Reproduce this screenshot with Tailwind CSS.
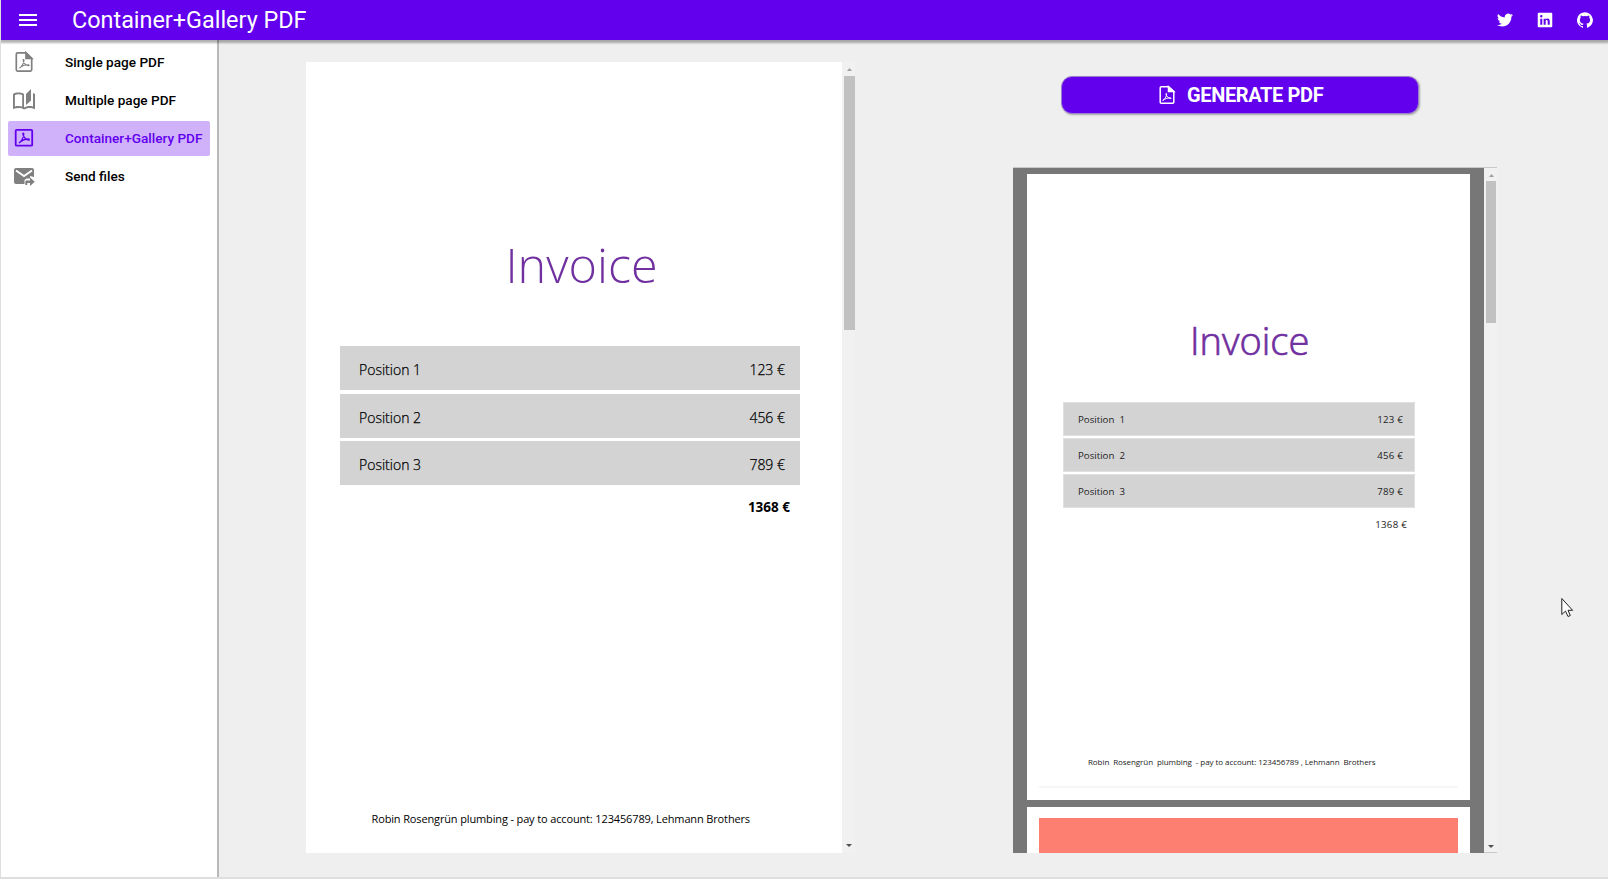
<!DOCTYPE html>
<html lang="en">
<head>
<meta charset="utf-8">
<title>Container+Gallery PDF</title>
<script src="https://cdn.jsdelivr.net/npm/@tailwindcss/browser@4"></script>
</head>
<body class="w-[1608px] h-[879px] overflow-hidden bg-[#efefef] border-l border-[#dedede] font-['Roboto',sans-serif] flex flex-col">
<header class="h-10 shrink-0 bg-[#6200ee] text-white flex items-center pl-[14px] pr-[15px] relative z-10 shadow-[0_2px_2px_1px_rgba(0,0,0,0.3)]">
  <svg class="size-6 ml-px" viewBox="0 0 24 24" fill="currentColor"><path d="M3 18h18v-2H3v2zm0-5h18v-2H3v2zm0-7v2h18V6H3z"/></svg>
  <h1 class="ml-8 text-[23.4px] leading-10 whitespace-nowrap grow">Container+Gallery PDF</h1>
  <div class="flex items-center gap-6">
    <svg class="size-4" viewBox="0 0 24 24" fill="currentColor"><path d="M23.95 4.57a10 10 0 0 1-2.82.78 4.96 4.96 0 0 0 2.16-2.73c-.95.56-2 .96-3.13 1.19a4.92 4.92 0 0 0-8.38 4.48C7.69 8.1 4.07 6.13 1.64 3.16a4.92 4.92 0 0 0 1.52 6.57 4.9 4.9 0 0 1-2.23-.61v.06a4.92 4.92 0 0 0 3.95 4.83 5 5 0 0 1-2.21.08 4.94 4.94 0 0 0 4.6 3.42A9.87 9.87 0 0 1 0 19.54a14 14 0 0 0 7.55 2.21c9.05 0 14-7.5 14-13.98 0-.21 0-.42-.02-.63a9.94 9.94 0 0 0 2.46-2.55z"/></svg>
    <svg class="size-4" viewBox="1 1 22 22" fill="currentColor"><path d="M20.500 2A1.500 1.500 0 0 1 22 3.500v17a1.500 1.500 0 0 1-1.500 1.500h-17A1.500 1.500 0 0 1 2 20.500v-17A1.500 1.500 0 0 1 3.500 2h17m-2 16.500v-5.300a3.260 3.260 0 0 0-3.260-3.260c-.85 0-1.840.52-2.320 1.300v-1.110h-2.790v8.370h2.790v-4.930c0-.77.62-1.400 1.390-1.400a1.400 1.400 0 0 1 1.400 1.400v4.930h2.790M6.880 8.560a1.680 1.680 0 0 0 1.680-1.680c0-.93-.75-1.690-1.680-1.690a1.690 1.690 0 0 0-1.690 1.690c0 .93.76 1.680 1.690 1.680m1.390 9.940v-8.370H5.500v8.370h2.770z"/></svg>
    <svg class="size-4" viewBox="0 0 24 24" fill="currentColor"><path d="M12 .3a12 12 0 0 0-3.800 23.380c.6.12.83-.26.83-.57L9 21.070c-3.340.72-4.040-1.610-4.040-1.610-.55-1.390-1.340-1.760-1.340-1.760-1.080-.74.09-.73.09-.73 1.200.09 1.830 1.240 1.830 1.240 1.080 1.830 2.810 1.300 3.500 1 .1-.78.420-1.310.76-1.610-2.670-.3-5.470-1.330-5.470-5.930 0-1.310.47-2.380 1.240-3.220-.14-.3-.54-1.520.1-3.180 0 0 1-.32 3.300 1.230a11.500 11.500 0 0 1 6 0c2.280-1.550 3.290-1.230 3.290-1.230.64 1.660.24 2.880.12 3.180a4.650 4.650 0 0 1 1.230 3.220c0 4.610-2.800 5.630-5.480 5.920.42.36.81 1.100.81 2.220l-.01 3.290c0 .31.2.69.82.57A12 12 0 0 0 12 .3"/></svg>
  </div>
</header>
<div class="flex grow min-h-0 border-b-2 border-[#dedede]">
  <nav class="w-[218px] shrink-0 bg-white border-r-2 border-[#b8b8b8] pt-[5px] px-[7px] text-[13.600px] font-medium text-black flex flex-col gap-[3px] whitespace-nowrap">
    <a class="h-[35px] flex items-center pl-[4px] gap-[29px] pb-px"><svg class="size-6 text-[#808080] shrink-0" viewBox="0 0 24 24" fill="none" stroke="currentColor" stroke-width="1.700"><path d="M14 2.900H5.600C4.800 2.900 4.300 3.400 4.300 4.200v15.600c0 .8.5 1.300 1.300 1.300h12.800c.8 0 1.300-.5 1.300-1.300V8.500z"/><path d="M14 2.900v5.600h5.700z" fill="currentColor"/><path stroke-width="1.100" d="M7.500 18c2-1 4.500-5 4.500-7.800 0-1-1-1-.9 0 .2 2.500 3 5.500 5.400 5.600 1 0 .8-1-.3-1-2.800 0-6 .8-8.700 3.200z"/></svg>Single page PDF</a>
    <a class="h-[35px] flex items-center pl-[4px] gap-[29px] pb-px"><svg class="size-6 text-[#808080] shrink-0" viewBox="0 0 24 24" fill="currentColor"><path fill-rule="evenodd" d="M1 6v15c2-.7 3.700-1 5.500-1 1.950 0 4.050.4 5.500 1.500 1.350-.85 3.800-1.500 5.500-1.500 1.850 0 3.500.3 5.500 1.200V6c-.6-.45-1.250-.75-2-1v13.500c-1.100-.35-2.300-.5-3.500-.5-1.700 0-4.150.65-5.500 1.500V6c-1.450-1.100-3.550-1.500-5.500-1.500S2.450 4.900 1 6zM2.900 7c1-.5 2.300-.7 3.600-.7s2.600.2 3.700.7v11.600c-1.200-.4-2.500-.6-3.700-.6s-2.500.1-3.600.5z"/><path d="M19 1l-5 5v11l5-4.500z"/></svg>Multiple page PDF</a>
    <a class="h-[35px] w-[202px] rounded-xs flex items-center pl-[4px] gap-[29px] pb-px bg-[#d0b2fb] text-[#6200ee]"><svg class="size-6 shrink-0" viewBox="0 0 24 24" fill="none" stroke="currentColor" stroke-width="1.800"><rect x="3.700" y="3.900" width="16.500" height="15.800" rx="1"/><path stroke-width="1.300" d="M7 17c2-1 5-6 4.800-9.200-.1-1-1.100-1-1 0 .3 3 3.300 6.100 5.900 6.300 1 0 .8-1.100-.3-1.100-3.200 0-6.400 1-9.400 4z"/></svg>Container+Gallery PDF</a>
    <a class="h-[35px] flex items-center pl-[4px] gap-[29px] pb-px"><svg class="size-6 text-[#808080] shrink-0" viewBox="0 0 24 24" fill="currentColor"><path d="M4 4h16a2 2 0 0 1 2 2v7l-4-1v2.500h-3.500L12.500 16v4H4a2 2 0 0 1-2-2V6a2 2 0 0 1 2-2"/><path d="M4 6.500 12 12l8-5.500" fill="none" stroke="#fff" stroke-width="1.900"/><path d="m18 13.500 4.800 4.300-4.800 4.300v-3.200h-2.700V21h-2v-3.600q0-1 1-1H18z"/></svg>Send files</a>
  </nav>

  <main class="flex grow items-start font-['Open_Sans',sans-serif] text-black">
    <section class="ml-[87px] mt-[22px] w-[549px] h-[791px] flex shrink-0">
      <article class="w-[536px] bg-white pl-[34px] pr-[42px] flex flex-col">
        <h2 class="mt-[169px] h-[66px] leading-[66px] text-center text-[48.500px] font-light text-[#7030a0] pl-[23px]">Invoice</h2>
        <ul class="mt-[49px] text-[14px] flex flex-col gap-[3.500px] font-light [-webkit-text-stroke:0.25px_black]">
          <li class="h-11 bg-[#d3d3d3] flex items-center justify-between pl-[19px] pr-[15px] pt-[3px]"><span>Position 1</span><span>123 €</span></li>
          <li class="h-11 bg-[#d3d3d3] flex items-center justify-between pl-[19px] pr-[15px] pt-[3px]"><span>Position 2</span><span>456 €</span></li>
          <li class="h-11 bg-[#d3d3d3] flex items-center justify-between pl-[19px] pr-[15px] pt-[3px]"><span>Position 3</span><span>789 €</span></li>
        </ul>
        <p class="mt-[12px] text-[13.500px] leading-5 font-bold text-right pr-[10px]">1368 €</p>
        <p class="mt-auto mb-[25px] text-[11px] leading-[18px] pl-[31.500px] tracking-[-0.140px] whitespace-nowrap">Robin Rosengrün plumbing - pay to account: 123456789, Lehmann Brothers</p>
      </article>
      <div class="w-[13px] bg-[#f1f1f1] flex flex-col items-center pt-[6px] pb-[6px] pl-px">
        <svg class="w-[5px] h-[3px] shrink-0" viewBox="0 0 5 3"><path d="M2.500 0 5 3H0z" fill="#a0a0a0"/></svg>
        <div class="mt-[5px] h-[254px] w-[11px] bg-[#c1c1c1]"></div>
        <svg class="w-[6px] h-[3px] mt-auto shrink-0" viewBox="0 0 6 3"><path d="M0 0h6L3 3z" fill="#505050"/></svg>
      </div>
    </section>

    <section class="ml-[158px] mt-[36px] w-[484px] flex flex-col">
      <button class="ml-[48px] w-[358px] h-[38px] rounded-[11px] bg-[#6200ee] border border-[#9a80cc] shadow-[1px_1px_2px_rgba(0,0,0,0.3)] text-white font-['Roboto',sans-serif] font-bold text-[20px] flex items-center pl-[96px] gap-[11px] whitespace-nowrap">
        <svg class="w-[18px] h-[20px]" viewBox="0 0 18 20" fill="none" stroke="currentColor" stroke-width="1.500"><path d="M10.500 1.700H3.200c-.6 0-1 .4-1 1v14.600c0 .6.4 1 1 1h11.600c.6 0 1-.4 1-1V6.500z"/><path d="M10.500 1.700v4.800h5.300z" fill="currentColor"/><path stroke-width="1" d="M4.700 15.500c1.800-.9 4-4 4-6.500 0-.8-.9-.8-.8 0 .2 2 2.600 4.500 4.800 4.600.8 0 .7-.8-.2-.8-2.500 0-5.500.8-7.800 2.700z"/></svg>
        <span class="tracking-[-0.370px]">GENERATE PDF</span>
      </button>
      <div class="mt-[53px] h-[686px] flex overflow-hidden border-t border-[#c8c8c8]">
        <div class="w-[471px] bg-[#777] pt-[5.500px] pl-[14px] pr-[14px] flex flex-col gap-[7px] shrink-0">
          <article class="h-[626px] shrink-0 bg-white flex flex-col pl-[36px] pr-[12px]">
            <h2 class="mt-[141px] h-[50px] leading-[50px] text-[38px] font-light [-webkit-text-stroke:0.7px_#7030a0] text-[#7030a0] pl-[127px]">Invoice</h2>
            <ul class="mt-[37px] w-[352px] text-[9.700px] flex flex-col gap-[2px]">
              <li class="h-[34px] bg-[#d3d3d3] border border-[#e0e0e0] flex items-center justify-between pl-[14px] pr-[11px] pt-[4px] text-[#222]"><span>Position&nbsp; 1</span><span class="tracking-[0.200px]">123 €</span></li>
              <li class="h-[34px] bg-[#d3d3d3] border border-[#e0e0e0] flex items-center justify-between pl-[14px] pr-[11px] pt-[4px] text-[#222]"><span>Position&nbsp; 2</span><span class="tracking-[0.200px]">456 €</span></li>
              <li class="h-[34px] bg-[#d3d3d3] border border-[#e0e0e0] flex items-center justify-between pl-[14px] pr-[11px] pt-[4px] text-[#222]"><span>Position&nbsp; 3</span><span class="tracking-[0.200px]">789 €</span></li>
            </ul>
            <p class="mt-[10px] w-[344px] text-[9.700px] leading-[14px] text-right tracking-[0.250px] text-[#222]">1368 €</p>
            <p class="mt-auto text-[8px] leading-[12px] pl-[25px] tracking-[-0.070px] whitespace-nowrap text-[#222]">Robin&nbsp; Rosengrün&nbsp; plumbing&nbsp; - pay to account: 123456789 , Lehmann&nbsp; Brothers</p>
            <div class="mt-[18px] mb-[12px] h-[2px] -ml-[24px] bg-[#f6f6f6] shrink-0"></div>
          </article>
          <article class="h-[60px] shrink-0 bg-white pt-[11px] px-[12px]"><div class="h-full bg-[#fc7f72]"></div></article>
        </div>
        <div class="w-[13px] bg-[#f1f1f1] flex flex-col items-center pt-[6px] pb-[4px] pl-px border-b border-[#c8c8c8]">
          <svg class="w-[5px] h-[3px] shrink-0" viewBox="0 0 5 3"><path d="M2.500 0 5 3H0z" fill="#a0a0a0"/></svg>
          <div class="mt-[4px] h-[142px] w-[10px] bg-[#c1c1c1]"></div>
          <svg class="w-[6px] h-[3px] mt-auto shrink-0" viewBox="0 0 6 3"><path d="M0 0h6L3 3z" fill="#505050"/></svg>
        </div>
      </div>
    </section>
  </main>
</div>
<svg class="absolute left-[1561px] top-[597px] w-[13px] h-[21px]" viewBox="0 0 13 21"><path d="M.8 1.500v16l3.700-3.400 2.500 5.400 2.300-1-2.300-5.200h4.600z" fill="#fff" stroke="#222" stroke-width="1"/></svg>
</body>
</html>
